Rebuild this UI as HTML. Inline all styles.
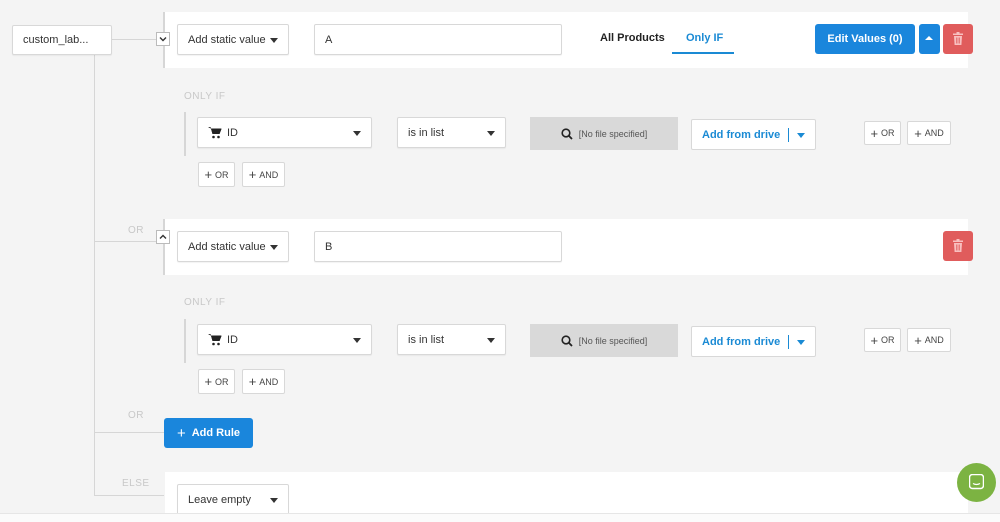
<!DOCTYPE html>
<html><head><meta charset="utf-8"><style>
*{box-sizing:border-box;margin:0;padding:0}
body{width:1000px;height:522px;background:#f4f4f4;position:relative;overflow:hidden;font-family:"Liberation Sans",sans-serif;color:#333}
.a{position:absolute}
.box{position:absolute;background:#fff;border:1px solid #d8d8d8;border-radius:2px;font-size:11px;display:flex;align-items:center;padding-left:10px;box-shadow:0 1px 1px rgba(0,0,0,.05)}
.car{position:absolute;right:10px;top:50%;margin-top:-2px;width:0;height:0;border-left:4px solid transparent;border-right:4px solid transparent;border-top:5px solid #333}
.panel{position:absolute;left:165px;width:803px;background:#fff}
.ln{position:absolute;background:#d6d6d6}
.lbl{position:absolute;font-size:10px;color:#c8c8c8;letter-spacing:.5px}
.sm{position:absolute;background:#fff;border:1px solid #d8d8d8;border-radius:2px;font-size:9px;display:flex;align-items:center;justify-content:center;color:#444}
.sm b{font-size:13px;font-weight:normal;margin-right:3px}
.tog{position:absolute;width:14px;height:14px;background:#fff;border:1px solid #bbb;font-size:9px;display:flex;align-items:center;justify-content:center}
.file{position:absolute;background:#d9d9d9;font-size:9px;color:#555;display:flex;align-items:center;justify-content:center}
.file svg{margin-right:6px}
.drive{position:absolute;background:#fff;border:1px solid #d8d8d8;border-radius:2px;font-size:11px;font-weight:bold;color:#1a8ad4;display:flex;align-items:center;padding-left:10px}
.del{position:absolute;background:#e05c5c;border-radius:3px}
.cart{margin-right:5px}
</style></head><body>
<div class="ln" style="left:94px;top:54px;width:1px;height:441px"></div>
<div class="ln" style="left:111px;top:39px;width:52px;height:1px"></div>
<div class="ln" style="left:94px;top:241px;width:70px;height:1px"></div>
<div class="ln" style="left:94px;top:432px;width:70px;height:1px"></div>
<div class="ln" style="left:94px;top:495px;width:70px;height:1px"></div>
<div class="box" style="left:12px;top:25px;width:100px;height:30px;font-size:11px">custom_lab...</div>

<div class="panel" style="top:12px;height:56px"></div>
<div class="ln" style="left:163px;top:12px;width:2px;height:56px"></div>
<div class="tog" style="left:156px;top:32px"><svg width="8" height="6" viewBox="0 0 8 6"><path d="M1 1.5L4 4.5L7 1.5" fill="none" stroke="#333" stroke-width="1.4"/></svg></div>
<div class="box" style="left:177px;top:24px;width:112px;height:31px">Add static value<span class="car"></span></div>
<div class="box" style="left:314px;top:24px;width:248px;height:31px">A</div>
<div class="a" style="left:600px;top:32px;font-size:11px;font-weight:bold;color:#222">All Products</div>
<div class="a" style="left:686px;top:32px;font-size:11px;font-weight:bold;color:#1a8ad4">Only IF</div>
<div class="a" style="left:672px;top:52px;width:62px;height:2px;background:#1a8ad4"></div>
<div class="a" style="left:815px;top:24px;width:100px;height:30px;background:#1a86dc;border-radius:3px;color:#fff;font-size:11px;font-weight:bold;display:flex;align-items:center;justify-content:center">Edit Values (0)</div>
<div class="a" style="left:919px;top:24px;width:21px;height:30px;background:#1a86dc;border-radius:3px"><div class="a" style="left:6px;top:12px;border-left:4px solid transparent;border-right:4px solid transparent;border-bottom:4px solid #fff"></div></div>
<div class="del" style="left:943px;top:24px;width:30px;height:30px"><svg class="a" style="left:10px;top:8px" width="10" height="13" viewBox="0 0 10 13"><rect x="0" y="1.5" width="10" height="1.5" fill="#f8c0c0"/><rect x="3.5" y="0" width="3" height="2" fill="#f8c0c0"/><path d="M1 4h8l-.6 9H1.6z" fill="#f8c0c0"/><path d="M3.5 5.5v6M5 5.5v6M6.5 5.5v6" stroke="#e05c5c" stroke-width=".7"/></svg></div>

<div class="lbl" style="left:184px;top:91px">ONLY IF</div>
<div class="ln" style="left:184px;top:112px;width:2px;height:44px"></div>
<div class="box" style="left:197px;top:117px;width:175px;height:31px"><svg class="cart" width="14" height="13" viewBox="0 0 14 13"><path d="M0 1h2.5l2 7h7l2-5H3.5" fill="#222"/><path d="M3 2.5h10.5l-2 5.5h-7z" fill="#222"/><circle cx="5.5" cy="11" r="1.3" fill="#222"/><circle cx="10.5" cy="11" r="1.3" fill="#222"/></svg>ID<span class="car"></span></div>
<div class="box" style="left:397px;top:117px;width:109px;height:31px">is in list<span class="car"></span></div>
<div class="file" style="left:530px;top:117px;width:148px;height:33px"><svg width="12" height="12" viewBox="0 0 12 12"><circle cx="5" cy="5" r="3.8" fill="none" stroke="#222" stroke-width="1.6"/><path d="M7.8 7.8L11 11" stroke="#222" stroke-width="1.8"/></svg>[No file specified]</div>
<div class="drive" style="left:691px;top:119px;width:125px;height:31px">Add from drive<span class="a" style="left:96px;top:8px;width:1px;height:14px;background:#1a8ad4"></span><span class="car" style="border-top-color:#1a8ad4"></span></div>
<div class="sm" style="left:864px;top:121px;width:37px;height:24px"><b>+</b>OR</div>
<div class="sm" style="left:907px;top:121px;width:44px;height:24px"><b>+</b>AND</div>
<div class="sm" style="left:198px;top:162px;width:37px;height:25px"><b>+</b>OR</div>
<div class="sm" style="left:242px;top:162px;width:43px;height:25px"><b>+</b>AND</div>

<div class="lbl" style="left:128px;top:225px">OR</div>
<div class="panel" style="top:219px;height:56px"></div>
<div class="ln" style="left:163px;top:219px;width:2px;height:56px"></div>
<div class="tog" style="left:156px;top:230px"><svg width="8" height="6" viewBox="0 0 8 6"><path d="M1 4.5L4 1.5L7 4.5" fill="none" stroke="#333" stroke-width="1.4"/></svg></div>
<div class="box" style="left:177px;top:231px;width:112px;height:31px">Add static value<span class="car"></span></div>
<div class="box" style="left:314px;top:231px;width:248px;height:31px">B</div>
<div class="del" style="left:943px;top:231px;width:30px;height:30px"><svg class="a" style="left:10px;top:8px" width="10" height="13" viewBox="0 0 10 13"><rect x="0" y="1.5" width="10" height="1.5" fill="#f8c0c0"/><rect x="3.5" y="0" width="3" height="2" fill="#f8c0c0"/><path d="M1 4h8l-.6 9H1.6z" fill="#f8c0c0"/><path d="M3.5 5.5v6M5 5.5v6M6.5 5.5v6" stroke="#e05c5c" stroke-width=".7"/></svg></div>

<div class="lbl" style="left:184px;top:297px">ONLY IF</div>
<div class="ln" style="left:184px;top:319px;width:2px;height:44px"></div>
<div class="box" style="left:197px;top:324px;width:175px;height:31px"><svg class="cart" width="14" height="13" viewBox="0 0 14 13"><path d="M0 1h2.5l2 7h7l2-5H3.5" fill="#222"/><path d="M3 2.5h10.5l-2 5.5h-7z" fill="#222"/><circle cx="5.5" cy="11" r="1.3" fill="#222"/><circle cx="10.5" cy="11" r="1.3" fill="#222"/></svg>ID<span class="car"></span></div>
<div class="box" style="left:397px;top:324px;width:109px;height:31px">is in list<span class="car"></span></div>
<div class="file" style="left:530px;top:324px;width:148px;height:33px"><svg width="12" height="12" viewBox="0 0 12 12"><circle cx="5" cy="5" r="3.8" fill="none" stroke="#222" stroke-width="1.6"/><path d="M7.8 7.8L11 11" stroke="#222" stroke-width="1.8"/></svg>[No file specified]</div>
<div class="drive" style="left:691px;top:326px;width:125px;height:31px">Add from drive<span class="a" style="left:96px;top:8px;width:1px;height:14px;background:#1a8ad4"></span><span class="car" style="border-top-color:#1a8ad4"></span></div>
<div class="sm" style="left:864px;top:328px;width:37px;height:24px"><b>+</b>OR</div>
<div class="sm" style="left:907px;top:328px;width:44px;height:24px"><b>+</b>AND</div>
<div class="sm" style="left:198px;top:369px;width:37px;height:25px"><b>+</b>OR</div>
<div class="sm" style="left:242px;top:369px;width:43px;height:25px"><b>+</b>AND</div>

<div class="lbl" style="left:128px;top:410px">OR</div>
<div class="a" style="left:164px;top:418px;width:89px;height:30px;background:#1a86dc;border-radius:3px;color:#fff;font-size:11px;font-weight:bold;display:flex;align-items:center;justify-content:center"><span style="font-size:15px;font-weight:normal;margin-right:6px">+</span>Add Rule</div>

<div class="lbl" style="left:122px;top:478px">ELSE</div>
<div class="panel" style="top:472px;height:42px"></div>
<div class="box" style="left:177px;top:484px;width:112px;height:31px">Leave empty<span class="car"></span></div>
<div class="a" style="left:0;top:513px;width:1000px;height:9px;background:#fbfbfb;border-top:1px solid #e6e6e6"></div>
<div class="a" style="left:957px;top:463px;width:39px;height:39px;border-radius:50%;background:#7cb342"><svg class="a" style="left:12px;top:11px" width="15" height="16" viewBox="0 0 15 16"><rect x="0.5" y="0.5" width="14" height="14" rx="3" fill="none" stroke="#fff" stroke-width="1.5"/><path d="M4 9.5q3.5 2 7 0" fill="none" stroke="#fff" stroke-width="1.2"/></svg></div>
</body></html>
